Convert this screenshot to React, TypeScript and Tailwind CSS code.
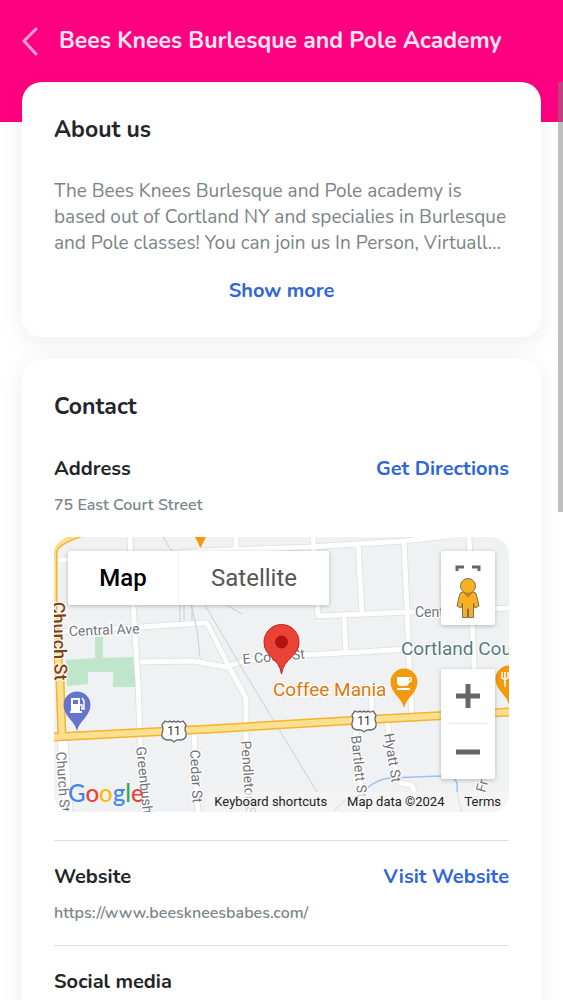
import { useState } from "react";
import type { ReactNode } from "react";

const NUNITO = "font-['Nunito','Lato',sans-serif]";

const GOOGLE_LETTERS = [
  { letter: "G", color: "#4285f4" },
  { letter: "o", color: "#ea4335" },
  { letter: "o", color: "#fbbc05" },
  { letter: "g", color: "#4285f4" },
  { letter: "l", color: "#34a853" },
  { letter: "e", color: "#ea4335" },
];

const MINOR_ROADS = [
  "M54 560H70",
  "M54 632L140 627L203 623Q206 622 208 625L229 667L244 694Q246 697 246 701V740L250 812",
  "M130 537L133 605L138 680L140 740L144 812",
  "M140 662L193 661L226 667L243 661L303 655L360 652L408 649",
  "M178 553L200 551L310 547L403 541L450 536",
  "M236 537V552",
  "M313 537L318 616L410 612L509 608",
  "M344 617L346 652",
  "M358 543L362 614",
  "M404 541L410 680L412 716",
  "M469 537L475 690",
  "M371 682L372 718",
  "M60 740L66 812",
  "M65 740L70 812",
  "M194 731L198 812",
  "M355 722L363 812",
  "M387 721L397 778Q399 784 406 784Q415 785 413 792",
];

const THIN_LINES = [
  "M163 537L205 605L243 670L317 792",
  "M180 600V622",
  "M184 600V620",
  "M190 600L197 630L200 657",
  "M192 600V620",
  "M225 604L242 614",
];

function RouteShield({ x, y }: { x: number; y: number }) {
  return (
    <g transform={`translate(${x} ${y})`}>
      <path
        d="M-9 -10Q-6 -8 -4 -10Q-2 -8 0 -10Q2 -8 4 -10Q6 -8 9 -10L12 -6Q10 -2 12 2Q13 8 7 9Q2 8 0 11Q-2 8 -7 9Q-13 8 -12 2Q-10 -2 -12 -6Z"
        fill="#fff"
        stroke="#6b6b6b"
        strokeWidth="1.300"
        strokeLinejoin="round"
      />
      <text y="4" textAnchor="middle" fontSize="12" fill="#333">
        11
      </text>
    </g>
  );
}

function Pin({ x, y, color, children }: { x: number; y: number; color: string; children?: ReactNode }) {
  return (
    <g transform={`translate(${x} ${y})`}>
      <path
        d="M0 26C-2 16 -13.500 11 -13.500 0A13.500 13.500 0 0 1 13.500 0C13.500 11 2 16 0 26Z"
        fill={color}
      />
      {children}
    </g>
  );
}

function MapCanvas() {
  return (
    <svg
      viewBox="54 537 455 275"
      preserveAspectRatio="xMidYMid slice"
      className="block h-[275px] w-full font-['Roboto',sans-serif]"
      role="img"
      aria-label="Map of 75 East Court Street"
    >
      <rect x="54" y="537" width="455" height="275" fill="#f0f1f3" />

      <path d="M66 660L95 658V637H103V658L135 657L137 687H113V672H88V684L67 686Z" fill="#bfe5cb" />

      <g fill="none" stroke="#dcdee0" strokeWidth="6.500">
        {MINOR_ROADS.map((d) => (
          <path key={d} d={d} />
        ))}
      </g>
      <g fill="none" stroke="#fff" strokeWidth="5" strokeLinejoin="round">
        {MINOR_ROADS.map((d) => (
          <path key={d} d={d} />
        ))}
      </g>
      <g fill="none" stroke="#cbcdd0" strokeWidth="1">
        {THIN_LINES.map((d) => (
          <path key={d} d={d} />
        ))}
      </g>
      <path
        d="M367 788Q378 779 390 778L440 776Q456 776 457 784Q457 798 462 812M334 811L346 799"
        fill="none"
        stroke="#9dc0f9"
        strokeWidth="1.500"
      />

      {/* major roads */}
      <g fill="none" stroke="#f5b32e" strokeWidth="9">
        <path d="M80 533Q53 542 53 553V610L60 680L62 738" />
        <path d="M54 737L210 729L360 720L509 712" />
      </g>
      <g fill="none" stroke="#fde08f" strokeWidth="6">
        <path d="M80 533Q53 542 53 553V610L60 680L62 738" />
        <path d="M54 737L210 729L360 720L509 712" />
      </g>

      <g
        fontSize="14"
        fill="#6f7378"
        stroke="#fff"
        strokeWidth="2.500"
        strokeLinejoin="round"
        style={{ paintOrder: "stroke" }}
      >
        <text transform="translate(69 636) rotate(-2)">Central Ave</text>
        <text transform="translate(243 664) rotate(-5)">E Court St</text>
        <text x="415" y="617">Central Ave</text>
        <text transform="translate(56 752) rotate(86)">Church St</text>
        <text transform="translate(136 747) rotate(84)">Greenbush St</text>
        <text transform="translate(190 750) rotate(87)">Cedar St</text>
        <text transform="translate(241 741) rotate(86)">Pendleton St</text>
        <text transform="translate(351 736) rotate(84)">Bartlett St</text>
        <text transform="translate(384 734) rotate(81)">Hyatt St</text>
        <text transform="translate(485 793) rotate(-74)">Fr</text>
      </g>
      <text
        transform="translate(52 602) rotate(88)"
        fontSize="18"
        fontWeight="500"
        fill="#824112"
        stroke="#fff"
        strokeWidth="2"
        style={{ paintOrder: "stroke" }}
      >
        Church St
      </text>

      <g stroke="#fff" strokeWidth="2" strokeLinejoin="round" style={{ paintOrder: "stroke" }}>
        <text x="401" y="655" fontSize="19" fill="#587a7e">
          Cortland County
        </text>
        <text x="273" y="696" fontSize="19" fill="#d87a0c">
          Coffee Mania
        </text>
      </g>

      <RouteShield x={174} y={731} />
      <RouteShield x={364} y={721} />

      <path d="M195 537H206L200.500 548Z" fill="#f29a0b" />
      <Pin x={77} y={705} color="#6675cb">
        <path d="M-6 6V-7H3V6H5V8H-7V6ZM-4 -5V-1H1V-5Z" fill="#fff" fillRule="evenodd" />
        <path d="M3 0H5V4H7V-4L5 -7" fill="none" stroke="#fff" strokeWidth="1.500" />
      </Pin>
      <Pin x={404} y={682} color="#f29a0b">
        <path d="M-7 -5H5V0Q5 4 1 4H-3Q-7 4 -7 0ZM-7 6H6V8H-7Z" fill="#fff" />
        <path d="M5 -4H7Q8 0 4 0" fill="none" stroke="#fff" strokeWidth="1.500" />
      </Pin>
      <Pin x={509} y={679} color="#f29a0b">
        <path d="M-7 -7V-2Q-7 0 -4 0V8M-4 -7V0M-1 -7V-2Q-1 0 -4 0" fill="none" stroke="#fff" strokeWidth="1.500" />
      </Pin>

      <path
        d="M281.500 674C279.500 658 264 657 264 642A17.500 17.500 0 0 1 299 642C299 657 283.500 658 281.500 674Z"
        fill="#ea4335"
        stroke="#c5221f"
      />
      <circle cx="281.500" cy="642" r="6.500" fill="#b31412" />
    </svg>
  );
}

function Pegman() {
  return (
    <svg width="28" height="60" viewBox="0 0 28 60" aria-hidden="true">
      <path d="M3 13V9H10M18 9H25V13" fill="none" stroke="#666" strokeWidth="3" />
      <path
        d="M9 34H19Q22 34 22.500 37L25 48L21 50L19.500 45V59.500H14.500V51H13.500V59.500H8.500V45L7 50L3 48L5.500 37Q6 34 9 34Z"
        fill="#f9b020"
        stroke="#7d7259"
      />
      <path d="M9 34H19L14 40Z" fill="#e5771e" />
      <circle cx="14" cy="28" r="7.500" fill="#f9b020" stroke="#7d7259" />
    </svg>
  );
}

function LocationMap() {
  const [mapType, setMapType] = useState("map");

  const typeClass = (type: string) =>
    mapType === type ? "font-medium text-black" : "text-[#565656]";

  return (
    <div className="relative mt-5 overflow-hidden rounded-[18px] font-['Roboto',sans-serif]">
      <MapCanvas />

      <div className="absolute top-[14px] left-[14px] flex h-[54px] rounded-xs bg-white text-2xl shadow-[0_1px_4px_rgba(0,0,0,0.25)]">
        <button
          type="button"
          className={`w-[111px] border-r border-gray-100 ${typeClass("map")}`}
          onClick={() => setMapType("map")}
        >
          Map
        </button>
        <button
          type="button"
          className={`w-[150px] ${typeClass("satellite")}`}
          onClick={() => setMapType("satellite")}
        >
          Satellite
        </button>
      </div>

      <button
        type="button"
        aria-label="Street View"
        className="absolute top-[14px] right-[14px] flex h-[74px] w-[54px] items-center justify-center rounded-xs bg-white shadow-[0_1px_4px_rgba(0,0,0,0.25)]"
      >
        <Pegman />
      </button>

      <div className="absolute top-[132px] right-[14px] flex w-[54px] flex-col rounded-xs bg-white shadow-[0_1px_4px_rgba(0,0,0,0.25)]">
        <button type="button" aria-label="Zoom in" className="flex h-[54px] items-center justify-center">
          <svg width="26" height="26" viewBox="0 0 26 26" aria-hidden="true">
            <path d="M13 1V25M1 13H25" stroke="#666" strokeWidth="5" />
          </svg>
        </button>
        <div className="mx-[7px] h-px bg-[#e6e6e6]" />
        <button type="button" aria-label="Zoom out" className="flex h-[55px] items-center justify-center">
          <svg width="26" height="26" viewBox="0 0 26 26" aria-hidden="true">
            <path d="M1 13H25" stroke="#666" strokeWidth="5" />
          </svg>
        </button>
      </div>

      <a
        href="#google"
        aria-label="Google"
        className="absolute bottom-[3px] left-[14px] font-['Lato',sans-serif] text-2xl leading-8 font-medium"
      >
        {GOOGLE_LETTERS.map(({ letter, color }, index) => (
          <span key={index} style={{ color }}>
            {letter}
          </span>
        ))}
      </a>

      <div className="absolute right-0 bottom-0 flex h-5 items-center gap-5 bg-[#f5f5f5]/70 pr-2 pl-2 text-[13px] text-[#222]">
        <button type="button">Keyboard shortcuts</button>
        <span>Map data ©2024</span>
        <a href="#terms">Terms</a>
      </div>
    </div>
  );
}

interface ContactRowProps {
  title: string;
  linkLabel?: string;
  href?: string;
  value?: string;
}

function ContactRow({ title, linkLabel, href, value }: ContactRowProps) {
  return (
    <div>
      <div className="flex items-center justify-between text-[20px] leading-7 font-bold">
        <h3 className="text-[#232528]">{title}</h3>
        {linkLabel && (
          <a href={href} className="text-[#2f66d8]">
            {linkLabel}
          </a>
        )}
      </div>
      {value && (
        <p className="mt-[10px] text-[16px] leading-6 font-semibold text-[#7a868c]">{value}</p>
      )}
    </div>
  );
}

function Card({ title, children }: { title: string; children: ReactNode }) {
  return (
    <section className="rounded-[20px] bg-white px-8 pt-8 pb-[30px] shadow-[0_6px_24px_rgba(60,30,70,0.08)]">
      <h2 className="text-[23px] leading-8 font-bold text-[#232528]">{title}</h2>
      {children}
    </section>
  );
}

export default function App() {
  const [expanded, setExpanded] = useState(false);

  return (
    <div className={`relative h-screen overflow-hidden bg-white ${NUNITO}`}>
      <header className="flex h-[122px] items-start gap-5 bg-[#ff0080] px-5 pt-6">
        <button type="button" aria-label="Back" className="flex h-[34px] items-center">
          <svg width="19" height="30" viewBox="0 0 19 30" aria-hidden="true">
            <path
              d="M16 3L4 15L16 28"
              fill="none"
              stroke="#ffa0d2"
              strokeWidth="3"
              strokeLinecap="round"
              strokeLinejoin="round"
            />
          </svg>
        </button>
        <h1 className="text-[23px] leading-[34px] font-bold text-[#ffe6f3]">
          Bees Knees Burlesque and Pole Academy
        </h1>
      </header>

      <main className="relative -mt-10 flex flex-col gap-[22px] px-[22px]">
        <Card title="About us">
          <p
            className={`mt-8 text-[19px] leading-[26px] text-[#7b8487] ${expanded ? "" : "line-clamp-3"}`}
          >
            The Bees Knees Burlesque and Pole academy is based out of Cortland NY and specialies in
            Burlesque and Pole classes! You can join us In Person, Virtuall...
          </p>
          <button
            type="button"
            className="mx-auto mt-[19px] block text-[20px] leading-8 font-bold text-[#2f66d8]"
            onClick={() => setExpanded(!expanded)}
          >
            Show more
          </button>
        </Card>

        <Card title="Contact">
          <div className="mt-8">
            <ContactRow
              title="Address"
              linkLabel="Get Directions"
              href="#directions"
              value="75 East Court Street"
            />
            <LocationMap />
          </div>
          <div className="mt-7 border-t border-[#dcdfe1] pt-[22px] pb-5">
            <ContactRow
              title="Website"
              linkLabel="Visit Website"
              href="https://www.beeskneesbabes.com/"
              value="https://www.beeskneesbabes.com/"
            />
          </div>
          <div className="border-t border-[#dcdfe1] pt-[22px]">
            <ContactRow title="Social media" />
          </div>
        </Card>
      </main>

      {/* scroll indicator */}
      <div className="absolute top-[82px] right-0 h-[430px] w-[5px] bg-[#808080]/50" />
    </div>
  );
}
